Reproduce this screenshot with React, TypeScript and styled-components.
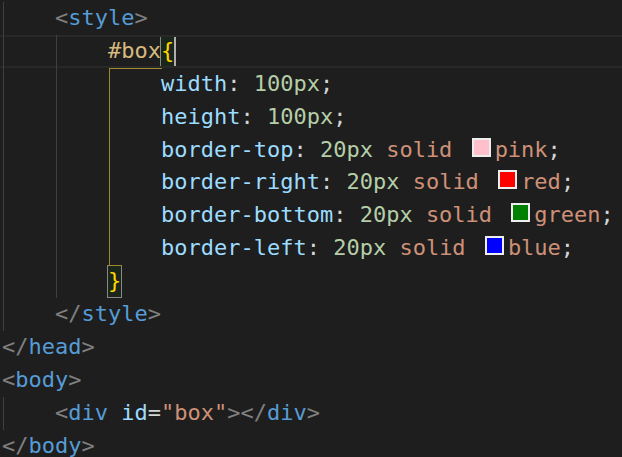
import React from "react";
import styled, { createGlobalStyle, css } from "styled-components";

const CW = 13.25;
const LH = 32.9;
const PAD = 2;

const Global = createGlobalStyle`
  html, body { margin: 0; padding: 0; background: #1e1e1e; }
  #root { height: 457px; }
`;

const Editor = styled.div`
  width: 622px;
  height: 457px;
  overflow: hidden;
  background: #1e1e1e;
  padding-top: 2px;
  box-sizing: border-box;
  font-family: "DejaVu Sans Mono", "Liberation Mono", monospace;
  font-size: 22px;
  color: #d4d4d4;
`;

const Line = styled.div<{ $current?: boolean }>`
  position: relative;
  height: ${LH}px;
  line-height: ${LH}px;
  white-space: pre;
  padding-left: ${PAD}px;
  ${(p) =>
    p.$current &&
    css`
      &::before {
        content: "";
        position: absolute;
        inset: 0;
        border-top: 2px solid #282828;
        border-bottom: 2px solid #282828;
        pointer-events: none;
      }
    `}
`;

const colX = (col: number) => Math.round(PAD + 0.5 + col * CW);

const Guide = styled.span<{ $col: number; $active?: boolean }>`
  position: absolute;
  top: 0;
  bottom: 0;
  left: ${(p) => colX(p.$col)}px;
  width: 1px;
  background: ${(p) => (p.$active ? "#a0892a" : "#404040")};
`;

const GuideCorner = styled.span<{ $col: number; $span: number; $left?: boolean }>`
  position: absolute;
  top: 0;
  bottom: ${(p) => (p.$left ? 0 : "auto")};
  left: ${(p) => colX(p.$col)}px;
  width: ${(p) => Math.round(p.$span * CW)}px;
  height: ${(p) => (p.$left ? "auto" : "1px")};
  border-top: 1px solid #a0892a;
  border-left: ${(p) => (p.$left ? "1px solid #a0892a" : "none")};
  box-sizing: border-box;
`;

const palette = {
  punct: "#808080",
  tag: "#569cd6",
  sel: "#d7ba7d",
  brace: "#ffd700",
  prop: "#9cdcfe",
  plain: "#d4d4d4",
  num: "#b5cea8",
  str: "#ce9178",
};

type Kind = keyof typeof palette;

const Tok = styled.span<{ $k: Kind }>`
  color: ${(p) => palette[p.$k]};
`;

const Bracket = styled.span`
  display: inline-block;
  box-sizing: border-box;
  height: ${LH}px;
  line-height: ${LH - 2}px;
  border: 1px solid #888888;
  background: rgba(0, 100, 0, 0.12);
  margin: 0 -1px;
  color: #ffd700;
  vertical-align: top;
`;

const Cursor = styled.span`
  display: inline-block;
  width: 2px;
  height: ${LH}px;
  background: #aeafad;
  vertical-align: top;
  margin-right: -2px;
`;

const Swatch = styled.span<{ $color: string }>`
  display: inline-block;
  box-sizing: border-box;
  width: 19px;
  height: 19px;
  border: 2px solid #eeeeee;
  background: ${(p) => p.$color};
  margin: 0 4px 0 6px;
`;

const Decl: React.FC<{ prop: string; num: string; value?: string; swatch?: string }> = ({
  prop,
  num,
  value,
  swatch,
}) => (
  <>
    {"            "}
    <Tok $k="prop">{prop}</Tok>
    <Tok $k="plain">: </Tok>
    <Tok $k="num">{num}</Tok>
    {value !== undefined && (
      <>
        <Tok $k="plain"> </Tok>
        <Tok $k="str">solid </Tok>
        <Swatch $color={swatch!} />
        <Tok $k="str">{value}</Tok>
      </>
    )}
    <Tok $k="plain">;</Tok>
  </>
);

const BodyGuides: React.FC = () => (
  <>
    <Guide $col={0} />
    <Guide $col={4} />
    <Guide $col={8} $active />
  </>
);

export default function App() {
  return (
    <>
      <Global />
      <Editor>
        <Line>
          <Guide $col={0} />
          {"    "}
          <Tok $k="punct">&lt;</Tok>
          <Tok $k="tag">style</Tok>
          <Tok $k="punct">&gt;</Tok>
        </Line>
        <Line $current>
          <Guide $col={0} />
          <Guide $col={4} />
          {"        "}
          <Tok $k="sel">#box</Tok>
          <Bracket>{"{"}</Bracket>
          <Cursor />
        </Line>
        <Line>
          <Guide $col={0} />
          <Guide $col={4} />
          <GuideCorner $col={8} $span={4} $left />
          <Decl prop="width" num="100px" />
        </Line>
        <Line>
          <BodyGuides />
          <Decl prop="height" num="100px" />
        </Line>
        <Line>
          <BodyGuides />
          <Decl prop="border-top" num="20px" value="pink" swatch="#ffc0cb" />
        </Line>
        <Line>
          <BodyGuides />
          <Decl prop="border-right" num="20px" value="red" swatch="#ff0000" />
        </Line>
        <Line>
          <BodyGuides />
          <Decl prop="border-bottom" num="20px" value="green" swatch="#008000" />
        </Line>
        <Line>
          <BodyGuides />
          <Decl prop="border-left" num="20px" value="blue" swatch="#0000ff" />
        </Line>
        <Line>
          <Guide $col={0} />
          <Guide $col={4} />
          {"        "}
          <Bracket>{"}"}</Bracket>
          <GuideCorner $col={8} $span={1} />
        </Line>
        <Line>
          <Guide $col={0} />
          {"    "}
          <Tok $k="punct">&lt;/</Tok>
          <Tok $k="tag">style</Tok>
          <Tok $k="punct">&gt;</Tok>
        </Line>
        <Line>
          <Tok $k="punct">&lt;/</Tok>
          <Tok $k="tag">head</Tok>
          <Tok $k="punct">&gt;</Tok>
        </Line>
        <Line>
          <Tok $k="punct">&lt;</Tok>
          <Tok $k="tag">body</Tok>
          <Tok $k="punct">&gt;</Tok>
        </Line>
        <Line>
          <Guide $col={0} />
          {"    "}
          <Tok $k="punct">&lt;</Tok>
          <Tok $k="tag">div</Tok>
          <Tok $k="plain"> </Tok>
          <Tok $k="prop">id</Tok>
          <Tok $k="plain">=</Tok>
          <Tok $k="str">"box"</Tok>
          <Tok $k="punct">&gt;&lt;/</Tok>
          <Tok $k="tag">div</Tok>
          <Tok $k="punct">&gt;</Tok>
        </Line>
        <Line>
          <Tok $k="punct">&lt;/</Tok>
          <Tok $k="tag">body</Tok>
          <Tok $k="punct">&gt;</Tok>
        </Line>
      </Editor>
    </>
  );
}
